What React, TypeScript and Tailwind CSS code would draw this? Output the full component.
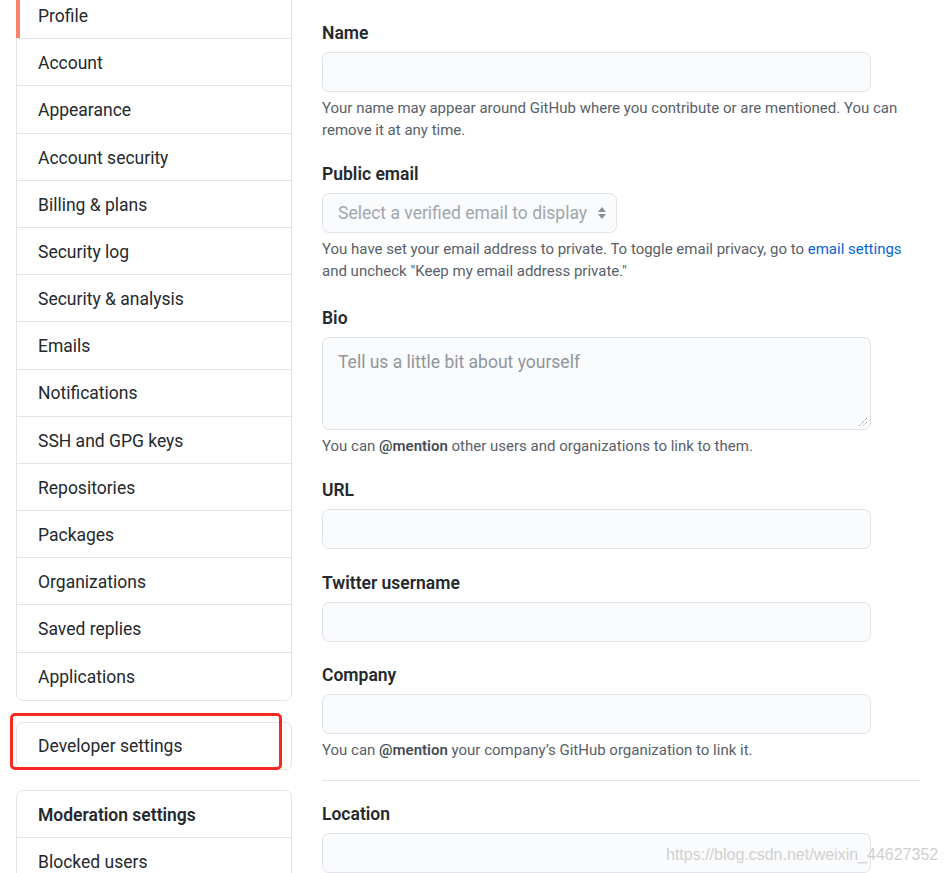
import clsx from "clsx";

const font = { fontFamily: "Roboto, 'Noto Sans', sans-serif" };

const menu = [
  "Profile",
  "Account",
  "Appearance",
  "Account security",
  "Billing & plans",
  "Security log",
  "Security & analysis",
  "Emails",
  "Notifications",
  "SSH and GPG keys",
  "Repositories",
  "Packages",
  "Organizations",
  "Saved replies",
  "Applications",
];

function SideRow({ label, active, last, bold }: { label: string; active?: boolean; last?: boolean; bold?: boolean }) {
  return (
    <div
      className={clsx(
        "relative flex h-[47.2px] items-center pl-[21px] pt-[2px] text-[17.5px] text-[#24292e]",
        !last && "border-b border-[#e1e4e8]",
        bold && "font-semibold",
      )}
    >
      {active ? <span className="absolute -left-px top-0 bottom-0 w-[4px] bg-[#f9826c]" /> : null}
      {label}
    </div>
  );
}

function Field({
  label,
  className,
  children,
}: {
  label: string;
  className?: string;
  children: React.ReactNode;
}) {
  return (
    <div className={className}>
      <label className="block text-[17.5px] font-semibold leading-[22px] text-[#24292e]">{label}</label>
      <div className="mt-[8px]">{children}</div>
    </div>
  );
}

function TextInput() {
  return <div className="h-[40px] w-[549px] rounded-[7px] border border-[#e1e4e8] bg-[#fafbfc]" />;
}

function Note({ children }: { children: React.ReactNode }) {
  return <p className="mt-[5px] text-[15px] leading-[22px] text-[#586069]">{children}</p>;
}

export default function App() {
  return (
    <div className="relative h-[873px] w-[948px] overflow-hidden bg-white" style={font}>
      <div className="flex pl-[16px]">
        {/* sidebar */}
        <aside className="-mt-[9px] w-[276px] shrink-0">
          <nav className="rounded-[7px] border border-[#e1e4e8]">
            {menu.map((m, i) => (
              <SideRow key={m} label={m} active={i === 0} last={i === menu.length - 1} />
            ))}
          </nav>
          <div className="relative mt-[21px] rounded-[7px] border border-[#e1e4e8]">
            <div className="flex h-[46px] items-center pl-[21px] pt-[1px] text-[17.5px] text-[#24292e]">Developer settings</div>
            <div className="pointer-events-none absolute -left-[7px] -top-[10px] h-[57px] w-[272px] rounded-[5px] border-[3px] border-[#f52a1f]" />
          </div>
          <div className="mt-[20px] rounded-[7px] border border-[#e1e4e8]">
            <SideRow label="Moderation settings" bold />
            <SideRow label="Blocked users" last />
          </div>
        </aside>

        {/* main */}
        <main className="ml-[30px] w-[598px] pt-[22px]">
          <Field label="Name">
            <TextInput />
            <Note>
              Your name may appear around GitHub where you contribute or are mentioned. You can
              <br />
              remove it at any time.
            </Note>
          </Field>

          <Field label="Public email" className="mt-[22px]">
            <div className="flex h-[40px] w-[295px] items-center justify-between rounded-[7px] border border-[#e1e4e8] bg-[#fafbfc] pl-[15px] pr-[9px] text-[17.5px] text-[#a0a6ad]">
              <span>Select a verified email to display</span>
              <svg width="10" height="16" viewBox="0 0 10 16" className="text-[#8a9097]">
                <path d="M5 2 L9 7 H1 Z M5 14 L1 9 H9 Z" fill="currentColor" />
              </svg>
            </div>
            <Note>
              You have set your email address to private. To toggle email privacy, go to{" "}
              <span className="text-[#0366d6]">email settings</span>
              <br />
              and uncheck "Keep my email address private."
            </Note>
          </Field>

          <Field label="Bio" className="mt-[25px]">
            <div className="relative h-[93px] w-[549px] rounded-[7px] border border-[#e1e4e8] bg-[#fafbfc] px-[15px] pt-[11px] text-[17.5px] text-[#8f959c]">
              Tell us a little bit about yourself
              <svg width="10" height="10" viewBox="0 0 10 10" className="absolute bottom-[2px] right-[2px]">
                <path d="M9 1 L1 9 M9 5 L5 9" stroke="#7a7f85" strokeWidth="1" strokeDasharray="1 1" />
              </svg>
            </div>
            <Note>
              You can <b className="font-semibold text-[#444d56]">@mention</b> other users and organizations to link to them.
            </Note>
          </Field>

          <Field label="URL" className="mt-[22px]">
            <TextInput />
          </Field>

          <Field label="Twitter username" className="mt-[23px]">
            <TextInput />
          </Field>

          <Field label="Company" className="mt-[22px]">
            <TextInput />
            <Note>
              You can <b className="font-semibold text-[#444d56]">@mention</b> your company’s GitHub organization to link it.
            </Note>
          </Field>

          <hr className="mt-[19px] border-t border-[#e1e4e8]" />

          <Field label="Location" className="mt-[22px]">
            <TextInput />
          </Field>
        </main>
      </div>

      <div className="pointer-events-none absolute left-[666px] top-[843px] text-[16px] text-[#d0d0d0]" style={{ fontFamily: "'Liberation Sans', sans-serif" }}>
        https://blog.csdn.net/weixin_44627352
      </div>
    </div>
  );
}
